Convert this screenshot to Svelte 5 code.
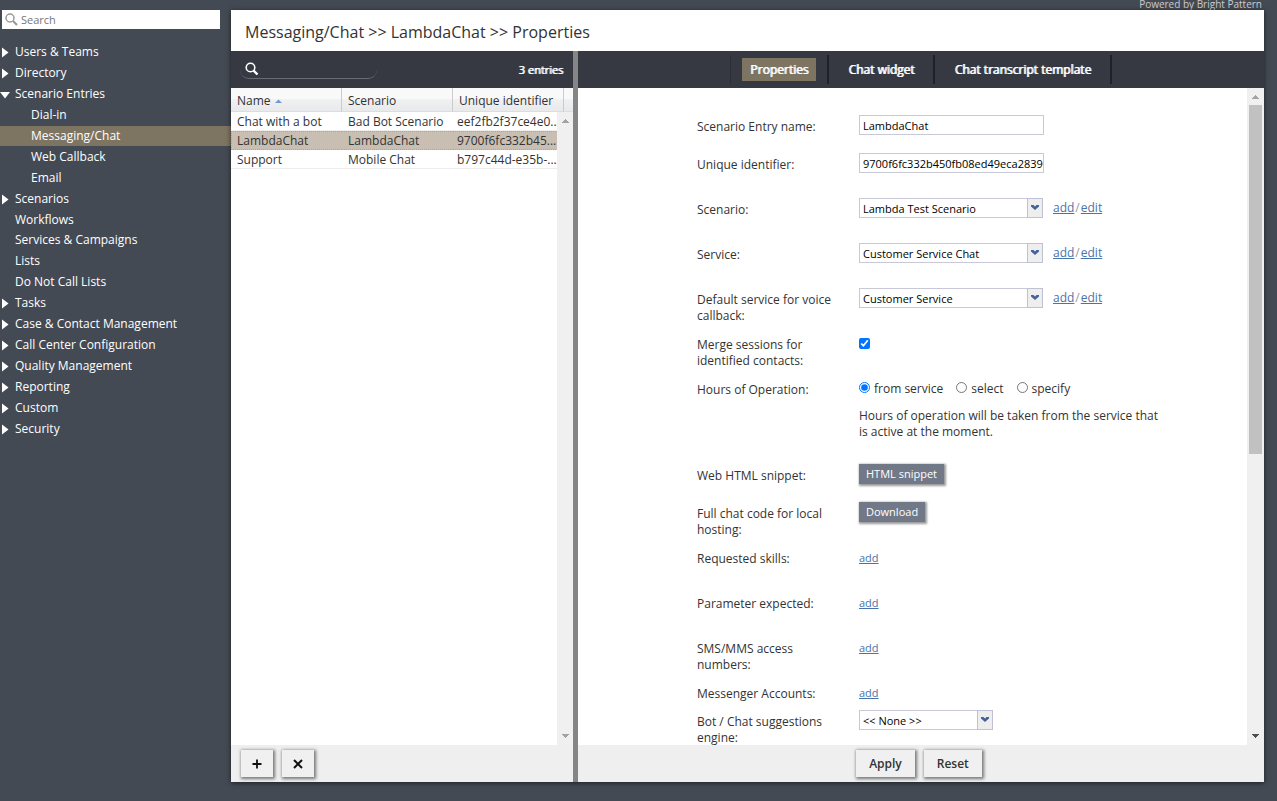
<style>
  :global(body) {
    margin: 0;
    background: #444a54;
  }

  .page {
    display: flex;
    height: 100vh;
    overflow: hidden;
    box-sizing: border-box;
    padding: 0 13px 19px 0;
    background: #444a54;
    font-family: "Open Sans", "Noto Sans", sans-serif;
    font-size: 12px;
    line-height: 16px;
    color: #333;
  }

  .page *,
  .page *::before {
    box-sizing: border-box;
  }

  input,
  select,
  button {
    margin: 0;
    font-family: inherit;
    font-size: 11px;
  }

  /* sidebar */
  .sidebar {
    flex: none;
    width: 231px;
    padding-top: 10px;
  }

  .side-search {
    display: flex;
    align-items: center;
    height: 19px;
    margin: 0 11px 0 2px;
    padding-left: 3px;
    background: #fff;
  }

  .side-search input {
    flex: 1;
    min-width: 0;
    height: 19px;
    padding: 0 3px;
    border: 0;
    outline: 0;
    background: none;
  }

  .side-search input::placeholder {
    color: #777;
    opacity: 1;
  }

  .menu {
    display: grid;
    grid-auto-rows: 1fr;
    height: 397px;
    margin: 13px 0 0;
    padding: 0;
    list-style: none;
  }

  .menu a {
    display: flex;
    align-items: center;
    height: 100%;
    color: #fff;
    font-weight: 500;
    text-decoration: none;
    white-space: nowrap;
  }

  .menu .mark {
    flex: none;
    width: 15px;
    height: 12px;
  }

  .menu .child a {
    padding-left: 16px;
  }

  .menu .active {
    background: #7e7462;
  }

  /* main panel */
  .main {
    flex: 1;
    min-width: 0;
    display: flex;
    flex-direction: column;
  }

  .powered {
    flex: none;
    height: 10px;
    padding-right: 2px;
    color: #ccc;
    font-size: 10px;
    line-height: 9px;
    text-align: right;
  }

  .panel {
    flex: 1;
    min-height: 0;
    display: flex;
    flex-direction: column;
    background: #fff;
    box-shadow: 0 1px 5px rgba(0, 0, 0, 0.6);
  }

  h1 {
    flex: none;
    height: 41px;
    margin: 0;
    padding: 0 14px;
    font-size: 16px;
    font-weight: 400;
    line-height: 44px;
  }

  .columns {
    flex: 1;
    min-height: 0;
    display: flex;
  }

  .list-pane {
    flex: none;
    width: 347px;
    display: flex;
    flex-direction: column;
    border-right: 5px solid #858585;
  }

  .form-pane {
    flex: 1;
    min-width: 0;
    display: flex;
    flex-direction: column;
  }

  .bar {
    flex: none;
    display: flex;
    align-items: center;
    height: 37px;
    background: #363942;
    color: #fff;
  }

  .list-bar {
    justify-content: space-between;
    padding: 0 10px 0 9px;
    font-size: 11px;
  }

  .count,
  .tab button {
    text-shadow: 1px 0 #fff;
  }

  .list-search {
    display: flex;
    align-items: center;
    width: 137px;
    height: 18px;
    padding-left: 5px;
    border-bottom: 1px solid #686b73;
    border-radius: 9px;
  }

  .list-search input {
    flex: 1;
    min-width: 0;
    border: 0;
    outline: 0;
    background: none;
    color: #fff;
  }

  .tabs {
    justify-content: center;
  }

  .tab {
    display: flex;
    align-items: center;
    height: 29px;
    padding: 0 11px;
    border-right: 2px solid #1f2127;
  }

  .tab:first-child {
    border-left: 1px solid #2b2e35;
  }

  .tab button {
    height: 23px;
    padding: 0 8px;
    border: 0;
    background: none;
    color: #fff;
    font-size: 12px;
  }

  .tab button.on {
    background: #7e7462;
  }

  .list-body {
    flex: 1;
    min-height: 0;
    position: relative;
  }

  table {
    width: 100%;
    table-layout: fixed;
    border-collapse: separate;
    border-spacing: 0;
  }

  th,
  td {
    text-align: left;
    white-space: nowrap;
    font-weight: 400;
  }

  .col {
    width: 111px;
  }

  th {
    height: 24px;
    padding: 2px 0 0 6px;
    border-right: 1px solid #ccc;
    border-bottom: 1px solid #ddd;
    background: linear-gradient(#f9f9f9 48%, #f1f1f2 50%, #e8e9eb);
  }

  th:last-child {
    border-right: 0;
  }

  th svg {
    margin-left: 1px;
  }

  td {
    height: 19px;
    padding: 0 0 0 6px;
    border-top: 1px solid transparent;
    border-bottom: 1px solid #ededed;
  }

  td:nth-child(3) {
    padding-left: 4px;
  }

  .selected td {
    border-top: 1px dotted #e3a512;
    border-bottom: 1px dotted #e3a512;
    background: #c8bfb2;
  }

  .selected td:first-child {
    border-left: 1px dotted #e3a512;
    padding-left: 5px;
  }

  .scroll {
    flex: none;
    display: flex;
    flex-direction: column;
    align-items: center;
    justify-content: space-between;
    width: 17px;
    padding: 5px 0;
    background: #f0f0f0;
  }

  .list-body .scroll {
    position: absolute;
    top: 24px;
    right: 0;
    bottom: 0;
    width: 16px;
  }

  .thumb {
    width: 13px;
    height: 54%;
    margin: 4px 0 auto;
    background: #c1c1c1;
  }

  .footer {
    flex: none;
    display: flex;
    align-items: center;
    gap: 9px;
    height: 37px;
    padding: 0 10px;
    background: #efefef;
  }

  .footer button {
    display: flex;
    align-items: center;
    justify-content: center;
    height: 27px;
    padding: 0 13px;
    border: 0;
    background: #f0f0f0;
    box-shadow: 1px 1px 3px 1px rgba(0, 0, 0, 0.5);
    color: #333;
    font-size: 12px;
    font-weight: 600;
  }

  .footer .square {
    width: 32px;
    padding: 0;
  }

  .form-footer {
    justify-content: center;
    padding-right: 14px;
  }

  /* form */
  .form-body {
    flex: 1;
    min-height: 0;
    display: flex;
  }

  form {
    flex: 1;
    min-width: 0;
    overflow: hidden;
    padding: 27px 0 0 119px;
  }

  .row {
    display: flex;
    height: 45px;
  }

  .row.short {
    height: 38px;
  }

  .row.tall {
    height: 86px;
  }

  .row.tight {
    height: 28px;
  }

  .row .name {
    flex: none;
    width: 162px;
    padding: 4px 24px 0 0;
  }

  .row .text {
    width: 185px;
    height: 20px;
    padding: 0 0 0 3px;
    border: 1px solid #c8c8d8;
    color: #000;
  }

  .combo {
    position: relative;
    width: 184px;
    height: 20px;
  }

  .combo.narrow {
    width: 134px;
  }

  .combo select {
    appearance: none;
    width: 100%;
    height: 20px;
    padding: 0 18px 0 3px;
    border: 1px solid #c8c8d8;
    border-radius: 0;
    background: #fff;
    color: #000;
  }

  .combo .arrow {
    position: absolute;
    top: 0;
    right: 0;
    display: flex;
    align-items: center;
    justify-content: center;
    width: 16px;
    height: 20px;
    border: 1px solid #bfc2d2;
    background: #eee;
    pointer-events: none;
  }

  .links {
    display: flex;
    gap: 1px;
    height: 20px;
    margin-left: 10px;
    padding-top: 2px;
    color: #999;
  }

  .links a,
  .add {
    color: #4774ab;
  }

  .add {
    height: 20px;
    padding-top: 3px;
    font-size: 11px;
  }

  .check {
    width: 11px;
    height: 11px;
    margin-top: 5px;
  }

  .options {
    display: flex;
    gap: 13px;
  }

  .options label {
    display: flex;
    gap: 4px;
    padding-top: 3px;
  }

  .options input {
    width: 11px;
    height: 11px;
    margin-top: 1px;
  }

  .hint {
    width: 300px;
    margin: 11px 0 0;
  }

  .grey {
    height: 20px;
    padding: 0 7px 1px;
    border: 0;
    background: #717988;
    box-shadow: 1px 1px 2px 1px rgba(0, 0, 0, 0.4);
    color: #fff;
    font-weight: 500;
  }
</style>

<script>
  const menu = [
    { label: 'Users & Teams', mark: 'closed' },
    { label: 'Directory', mark: 'closed' },
    { label: 'Scenario Entries', mark: 'open' },
    { label: 'Dial-in', child: true },
    { label: 'Messaging/Chat', child: true },
    { label: 'Web Callback', child: true },
    { label: 'Email', child: true },
    { label: 'Scenarios', mark: 'closed' },
    { label: 'Workflows' },
    { label: 'Services & Campaigns' },
    { label: 'Lists' },
    { label: 'Do Not Call Lists' },
    { label: 'Tasks', mark: 'closed' },
    { label: 'Case & Contact Management', mark: 'closed' },
    { label: 'Call Center Configuration', mark: 'closed' },
    { label: 'Quality Management', mark: 'closed' },
    { label: 'Reporting', mark: 'closed' },
    { label: 'Custom', mark: 'closed' },
    { label: 'Security', mark: 'closed' }
  ];

  const entries = [
    { name: 'Chat with a bot', scenario: 'Bad Bot Scenario', shortId: 'eef2fb2f37ce4e0...' },
    { name: 'LambdaChat', scenario: 'LambdaChat', shortId: '9700f6fc332b45...' },
    { name: 'Support', scenario: 'Mobile Chat', shortId: 'b797c44d-e35b-...' }
  ];

  const tabs = ['Properties', 'Chat widget', 'Chat transcript template'];

  let page = 'Messaging/Chat';
  let tab = 'Properties';
  let current = entries[1];
  let hours = 'from service';
  let merge = true;
  let entryName = current.name;
  let entryId = '9700f6fc332b450fb08ed49eca28390';
</script>

{#snippet up(color)}
  <svg width="7" height="8" viewBox="0 0 7 8" shape-rendering="crispEdges"><path d="M0 6h7L3.500 2z" fill={color} /></svg>
{/snippet}

{#snippet down(color)}
  <svg width="7" height="8" viewBox="0 0 7 8" shape-rendering="crispEdges"><path d="M0 2h7L3.500 6z" fill={color} /></svg>
{/snippet}

{#snippet combo(id, value, narrow)}
  <div class="combo" class:narrow>
    <select {id}>
      <option>{value}</option>
    </select>
    <span class="arrow">
      <svg width="8" height="8" viewBox="0 0 8 8"><path d="M0 1h2.500L4 2.500 5.500 1H8v1.500L4 6 0 2.500z" fill="#43639c" /></svg>
    </span>
  </div>
{/snippet}

{#snippet links()}
  <div class="links"><a href="#add">add</a><span>/</span><a href="#edit">edit</a></div>
{/snippet}

<div class="page">
  <nav class="sidebar">
    <div class="side-search">
      <svg width="13" height="13" viewBox="0 0 13 13" fill="none" stroke="#999">
        <circle cx="5" cy="5" r="4" stroke-width="1.500" />
        <path d="M8 8l4 4" stroke-width="2.200" />
      </svg>
      <input type="text" placeholder="Search" aria-label="Search" />
    </div>
    <ul class="menu">
      {#each menu as item}
        <li class:child={item.child} class:active={item.label === page}>
          <a href="#{item.label}">
            <svg class="mark" viewBox="0 0 15 12">
              {#if item.mark === 'closed'}
                <path d="M2 1.500v10l6.500-5z" fill="#fff" />
              {:else if item.mark === 'open'}
                <path d="M0 4h10L5 10.500z" fill="#fff" />
              {/if}
            </svg>
            {item.label}
          </a>
        </li>
      {/each}
    </ul>
  </nav>

  <div class="main">
    <div class="powered">Powered by Bright Pattern</div>
    <div class="panel">
      <h1>Messaging/Chat &gt;&gt; LambdaChat &gt;&gt; Properties</h1>
      <div class="columns">
        <section class="list-pane">
          <div class="bar list-bar">
            <div class="list-search">
              <svg width="14" height="14" viewBox="0 0 14 14" fill="none" stroke="#fff">
                <circle cx="5.500" cy="5.500" r="4.300" stroke-width="1.600" />
                <path d="M8.500 8.500l4 4" stroke-width="2.400" />
              </svg>
              <input type="text" aria-label="Search entries" />
            </div>
            <span class="count">3 entries</span>
          </div>
          <div class="list-body">
            <table>
              <colgroup>
                <col class="col" />
                <col class="col" />
                <col class="col" />
                <col />
              </colgroup>
              <thead>
                <tr>
                  <th>Name <svg width="7" height="7" viewBox="0 0 7 7"><path d="M0 5h7L3.500 1.500z" fill="#6c9bd2" /></svg></th>
                  <th>Scenario</th>
                  <th>Unique identifier</th>
                  <th></th>
                </tr>
              </thead>
              <tbody>
                {#each entries as entry}
                  <tr class:selected={entry === current}>
                    <td>{entry.name}</td>
                    <td>{entry.scenario}</td>
                    <td>{entry.shortId}</td>
                    <td></td>
                  </tr>
                {/each}
              </tbody>
            </table>
            <div class="scroll">
              {@render up('#a3a3a3')}
              {@render down('#a3a3a3')}
            </div>
          </div>
          <div class="footer">
            <button class="square" aria-label="Add entry">
              <svg width="10" height="10" viewBox="0 0 10 10"><path d="M5 .5v9M.5 5h9" stroke="#111" stroke-width="1.800" /></svg>
            </button>
            <button class="square" aria-label="Remove entry">
              <svg width="10" height="10" viewBox="0 0 10 10"><path d="M1 1l8 8M9 1L1 9" stroke="#111" stroke-width="2" /></svg>
            </button>
          </div>
        </section>

        <section class="form-pane">
          <div class="bar tabs">
            {#each tabs as name}
              <div class="tab">
                <button class:on={tab === name} on:click={() => (tab = name)}>{name}</button>
              </div>
            {/each}
          </div>
          <div class="form-body">
            <form id="entry">
              <div class="row short">
                <label class="name" for="entry-name">Scenario Entry name:</label>
                <input class="text" id="entry-name" type="text" bind:value={entryName} />
              </div>
              <div class="row">
                <label class="name" for="entry-id">Unique identifier:</label>
                <input class="text" id="entry-id" type="text" bind:value={entryId} />
              </div>
              <div class="row">
                <label class="name" for="scenario">Scenario:</label>
                {@render combo('scenario', 'Lambda Test Scenario')}
                {@render links()}
              </div>
              <div class="row">
                <label class="name" for="service">Service:</label>
                {@render combo('service', 'Customer Service Chat')}
                {@render links()}
              </div>
              <div class="row">
                <label class="name" for="voice">Default service for voice callback:</label>
                {@render combo('voice', 'Customer Service')}
                {@render links()}
              </div>
              <div class="row">
                <label class="name" for="merge">Merge sessions for identified contacts:</label>
                <input class="check" id="merge" type="checkbox" bind:checked={merge} />
              </div>
              <div class="row tall">
                <span class="name" id="hours">Hours of Operation:</span>
                <div>
                  <div class="options" role="radiogroup" aria-labelledby="hours">
                    {#each ['from service', 'select', 'specify'] as option}
                      <label><input type="radio" name="hours" value={option} bind:group={hours} />{option}</label>
                    {/each}
                  </div>
                  <p class="hint">Hours of operation will be taken from the service that is active at the moment.</p>
                </div>
              </div>
              <div class="row short">
                <span class="name">Web HTML snippet:</span>
                <button type="button" class="grey">HTML snippet</button>
              </div>
              <div class="row">
                <span class="name">Full chat code for local hosting:</span>
                <button type="button" class="grey">Download</button>
              </div>
              {#each ['Requested skills:', 'Parameter expected:', 'SMS/MMS access numbers:'] as name}
                <div class="row">
                  <span class="name">{name}</span>
                  <a class="add" href="#add">add</a>
                </div>
              {/each}
              <div class="row tight">
                <span class="name">Messenger Accounts:</span>
                <a class="add" href="#add">add</a>
              </div>
              <div class="row">
                <label class="name" for="bot">Bot / Chat suggestions engine:</label>
                {@render combo('bot', '<< None >>', true)}
              </div>
            </form>
            <div class="scroll">
              {@render up('#a3a3a3')}
              <div class="thumb"></div>
              {@render down('#505050')}
            </div>
          </div>
          <div class="footer form-footer">
            <button type="submit" form="entry">Apply</button>
            <button type="reset" form="entry">Reset</button>
          </div>
        </section>
      </div>
    </div>
  </div>
</div>
